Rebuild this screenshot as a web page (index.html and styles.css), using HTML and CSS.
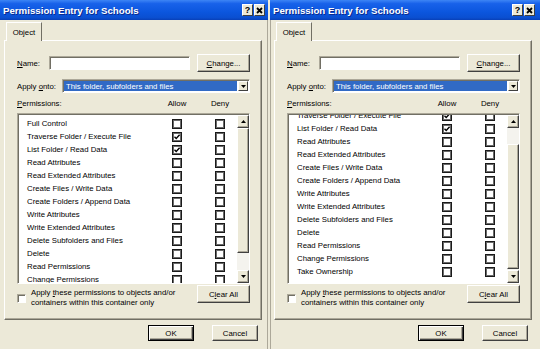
FILE: index.html
```html
<!DOCTYPE html>
<html lang="en">
<head>
<meta charset="UTF-8">
<title>Permission Entry for Schools</title>
<link rel="stylesheet" href="styles.css">
</head>
<body>
<div class="screen">

    <div class="window">
        <div class="titlebar">
            <span class="title">Permission Entry for Schools</span>
            <div class="title-buttons">
                <span class="tbtn">?</span>
                <span class="tbtn"><svg width="7" height="7" viewBox="0 0 7 7"><path d="M1 1L6 6M6 1L1 6" stroke="#000" stroke-width="1.8"/></svg></span>
            </div>
        </div>
        <div class="tabs"><div class="tab">Object</div></div>
        <div class="panel">
            <div class="row">
                <span class="label label-name"><u>N</u>ame:</span>
                <div class="textbox"></div>
                <button class="btn btn-side"><u>C</u>hange...</button>
            </div>
            <div class="row row-apply">
                <span class="label label-apply">Apply <u>o</u>nto:</span>
                <div class="combo">
                    <span class="combo-value">This folder, subfolders and files</span>
                    <span class="combo-arrow"><svg width="5" height="3" viewBox="0 0 5 3"><path d="M0 0H5L2.5 3Z" fill="#000"/></svg></span>
                </div>
            </div>
            <div class="perm-head">
                <span class="perm-title"><u>P</u>ermissions:</span>
                <span class="perm-col">Allow</span>
                <span class="perm-col perm-deny">Deny</span>
            </div>
            <div class="listbox">
                <div class="rows"><div class="rows-inner"></div></div>
                <div class="scrollbar">
                    <div class="sb-btn"><svg width="5" height="3" viewBox="0 0 5 3"><path d="M0 3H5L2.5 0Z" fill="#000"/></svg></div>
                    <div class="sb-track"><div class="sb-thumb"></div></div>
                    <div class="sb-btn"><svg width="5" height="3" viewBox="0 0 5 3"><path d="M0 0H5L2.5 3Z" fill="#000"/></svg></div>
                </div>
            </div>
            <div class="row-bottom">
                <div class="apply-only">
                    <span class="check3d"></span>
                    <span class="apply-text">Apply <u>t</u>hese permissions to objects and/or<br>containers within this container only</span>
                </div>
                <button class="btn btn-side">C<u>l</u>ear All</button>
            </div>
        </div>
        <div class="footer">
            <button class="btn btn-foot btn-default">OK</button>
            <button class="btn btn-foot">Cancel</button>
        </div>
    </div>

    <div class="window">
        <div class="titlebar">
            <span class="title">Permission Entry for Schools</span>
            <div class="title-buttons">
                <span class="tbtn">?</span>
                <span class="tbtn"><svg width="7" height="7" viewBox="0 0 7 7"><path d="M1 1L6 6M6 1L1 6" stroke="#000" stroke-width="1.8"/></svg></span>
            </div>
        </div>
        <div class="tabs"><div class="tab">Object</div></div>
        <div class="panel">
            <div class="row">
                <span class="label label-name"><u>N</u>ame:</span>
                <div class="textbox"></div>
                <button class="btn btn-side"><u>C</u>hange...</button>
            </div>
            <div class="row row-apply">
                <span class="label label-apply">Apply <u>o</u>nto:</span>
                <div class="combo">
                    <span class="combo-value">This folder, subfolders and files</span>
                    <span class="combo-arrow"><svg width="5" height="3" viewBox="0 0 5 3"><path d="M0 0H5L2.5 3Z" fill="#000"/></svg></span>
                </div>
            </div>
            <div class="perm-head">
                <span class="perm-title"><u>P</u>ermissions:</span>
                <span class="perm-col">Allow</span>
                <span class="perm-col perm-deny">Deny</span>
            </div>
            <div class="listbox scrolled">
                <div class="rows"><div class="rows-inner"></div></div>
                <div class="scrollbar">
                    <div class="sb-btn"><svg width="5" height="3" viewBox="0 0 5 3"><path d="M0 3H5L2.5 0Z" fill="#000"/></svg></div>
                    <div class="sb-track"><div class="sb-thumb"></div></div>
                    <div class="sb-btn"><svg width="5" height="3" viewBox="0 0 5 3"><path d="M0 0H5L2.5 3Z" fill="#000"/></svg></div>
                </div>
            </div>
            <div class="row-bottom">
                <div class="apply-only">
                    <span class="check3d"></span>
                    <span class="apply-text">Apply <u>t</u>hese permissions to objects and/or<br>containers within this container only</span>
                </div>
                <button class="btn btn-side">C<u>l</u>ear All</button>
            </div>
        </div>
        <div class="footer">
            <button class="btn btn-foot btn-default">OK</button>
            <button class="btn btn-foot">Cancel</button>
        </div>
    </div>

</div>

<script>
// Lista de permissões: nome e se "Allow" está marcado
const permissions = [
    ['Full Control', false],
    ['Traverse Folder / Execute File', true],
    ['List Folder / Read Data', true],
    ['Read Attributes', false],
    ['Read Extended Attributes', false],
    ['Create Files / Write Data', false],
    ['Create Folders / Append Data', false],
    ['Write Attributes', false],
    ['Write Extended Attributes', false],
    ['Delete Subfolders and Files', false],
    ['Delete', false],
    ['Read Permissions', false],
    ['Change Permissions', false],
    ['Take Ownership', false]
];

function checkbox(checked) {
    const mark = checked
        ? '<svg width="8" height="8" viewBox="0 0 8 8"><path d="M1.5 3.8L3.2 5.5L6.6 1.8" fill="none" stroke="#000" stroke-width="1.4"/></svg>'
        : '';
    return '<span class="pcheck">' + mark + '</span>';
}

document.querySelectorAll('.rows-inner').forEach(function (list) {
    permissions.forEach(function (p) {
        const row = document.createElement('div');
        row.className = 'prow';
        row.innerHTML = '<span class="pname">' + p[0] + '</span>' + checkbox(p[1]) + checkbox(false);
        list.appendChild(row);
    });
});
</script>
</body>
</html>
```

FILE: styles.css
```css
* {
    box-sizing: border-box;
}

body {
    margin: 0;
    width: 540px;
    height: 349px;
    overflow: hidden;
    background-color: #ece9d8;
    font-family: "Liberation Sans", Arial, sans-serif;
    font-size: 7.8px;
    color: #000;
}

u {
    text-decoration-thickness: 1px;
    text-underline-offset: 1px;
}

.screen {
    display: flex;
    gap: 2px;
    height: 349px;
}

.window {
    width: 268px;
    height: 349px;
    background-color: #ece9d8;
    box-shadow: inset -1px 0 0 #aca899;
}

.window + .window {
    width: 270px;
    box-shadow: inset 1px 0 0 #aca899;
}

/* Barra de título */
.titlebar {
    height: 20px;
    display: flex;
    align-items: center;
    justify-content: space-between;
    padding: 0 3px;
    background: linear-gradient(180deg, #3d85f5 0%, #1862ea 18%, #0b56de 60%, #0a4fd1 88%, #0840b8 100%);
}

.window + .window .titlebar {
    padding-right: 5px;
}

.title {
    color: #fff;
    font-weight: bold;
    font-size: 9.7px;
    text-shadow: 1px 1px 0 #0b2a8c;
}

.title-buttons {
    display: flex;
    gap: 1px;
}

.tbtn {
    width: 11px;
    height: 12px;
    display: flex;
    align-items: center;
    justify-content: center;
    background-color: #ece9d8;
    border: 1px solid;
    border-color: #fff #404040 #404040 #fff;
    font-weight: bold;
    font-size: 9px;
    line-height: 1;
}

/* Aba "Object" */
.tabs {
    height: 20px;
    padding: 2px 0 0 6px;
    display: flex;
}

.tab {
    position: relative;
    z-index: 1;
    width: 36px;
    height: 19px;
    display: flex;
    align-items: center;
    justify-content: center;
    background-color: #ece9d8;
    border: 1px solid;
    border-color: #fff #716f64 transparent #fff;
    border-bottom: none;
}

.panel {
    margin-left: 4px;
    width: 258px;
    height: 280px;
    border: 1px solid;
    border-color: #fff #716f64 #716f64 #fff;
    box-shadow: inset -1px -1px 0 #aca899;
    padding: 13px 11px 0 12px;
}

.row {
    display: flex;
    align-items: center;
    height: 18px;
}

.row-apply {
    height: 14px;
    margin-top: 7px;
}

.label-name {
    width: 32px;
}

.label-apply {
    width: 45px;
}

.textbox {
    width: 141px;
    height: 14px;
    background-color: #fff;
    border: 1px solid;
    border-color: #aca899 #fff #fff #aca899;
    box-shadow: inset 1px 1px 0 #716f64;
}

.btn {
    font: inherit;
    color: #000;
    padding: 0;
    display: flex;
    align-items: center;
    justify-content: center;
    background-color: #ece9d8;
    border: 1px solid;
    border-color: #fff #404040 #404040 #fff;
    box-shadow: inset -1px -1px 0 #aca899;
}

.btn-side {
    width: 53px;
    height: 18px;
    margin-left: auto;
}

.combo {
    flex: 1;
    height: 14px;
    display: flex;
    padding: 1px;
    background-color: #fff;
    border: 1px solid;
    border-color: #aca899 #fff #fff #aca899;
    box-shadow: inset 1px 1px 0 #716f64;
}

.combo-value {
    flex: 1;
    margin: 0 1px 0 0;
    padding-left: 2px;
    display: flex;
    align-items: center;
    background-color: #316ac5;
    color: #fff;
}

.combo-arrow {
    width: 10px;
    display: flex;
    align-items: center;
    justify-content: center;
    background-color: #ece9d8;
    border: 1px solid;
    border-color: #fff #404040 #404040 #fff;
}

/* Cabeçalho da lista de permissões */
.perm-head {
    display: flex;
    margin-top: 6px;
    height: 10px;
    line-height: 10px;
}

.perm-title {
    width: 145px;
}

.perm-col {
    width: 30px;
    text-align: center;
}

.perm-deny {
    margin-left: 13px;
}

.listbox {
    margin-top: 4px;
    height: 171px;
    display: flex;
    background-color: #fff;
    border: 1px solid;
    border-color: #aca899 #fff #fff #aca899;
    box-shadow: inset 1px 1px 0 #716f64;
    padding: 1px 0 0 1px;
}

.rows {
    flex: 1;
    overflow: hidden;
}

.rows-inner {
    padding-top: 2px;
}

.scrolled .rows-inner {
    margin-top: -21px;
}

.prow {
    display: flex;
    align-items: center;
    height: 13px;
    padding-left: 8px;
}

.pname {
    width: 145px;
    white-space: nowrap;
}

.pcheck {
    width: 10px;
    height: 10px;
    display: flex;
    align-items: center;
    justify-content: center;
    border: 1px solid #1a1a1a;
    box-shadow: inset 0 0 0 1px #6a6a6a;
    background-color: #fff;
}

.pcheck + .pcheck {
    margin-left: 33px;
}

/* Barra de rolagem */
.scrollbar {
    width: 12px;
    display: flex;
    flex-direction: column;
    background-color: #f4f3ee;
}

.sb-btn,
.sb-thumb {
    background-color: #ece9d8;
    border: 1px solid;
    border-color: #fff #404040 #404040 #fff;
    box-shadow: inset -1px -1px 0 #aca899;
}

.sb-btn {
    height: 13px;
    display: flex;
    align-items: center;
    justify-content: center;
}

.sb-track {
    flex: 1;
}

.sb-thumb {
    height: 125px;
}

.scrolled .sb-thumb {
    margin-top: 16px;
}

.row-bottom {
    display: flex;
    align-items: flex-start;
    margin-top: 1px;
}

.apply-only {
    display: flex;
    align-items: center;
    margin-top: 3px;
}

.check3d {
    width: 9px;
    height: 9px;
    margin-right: 5px;
    background-color: #fff;
    border: 1px solid;
    border-color: #aca899 #fff #fff #aca899;
    box-shadow: inset 1px 1px 0 #716f64;
}

.apply-text {
    line-height: 10px;
}

.footer {
    display: flex;
    justify-content: flex-end;
    gap: 18px;
    padding: 5px 10px 0 0;
}

.window + .window .footer {
    padding-right: 12px;
}

.btn-foot {
    width: 46px;
    height: 16px;
}

.btn-default {
    border-color: #000;
    box-shadow: inset 1px 1px 0 #fff, inset -1px -1px 0 #404040, inset -2px -2px 0 #aca899;
}
```
